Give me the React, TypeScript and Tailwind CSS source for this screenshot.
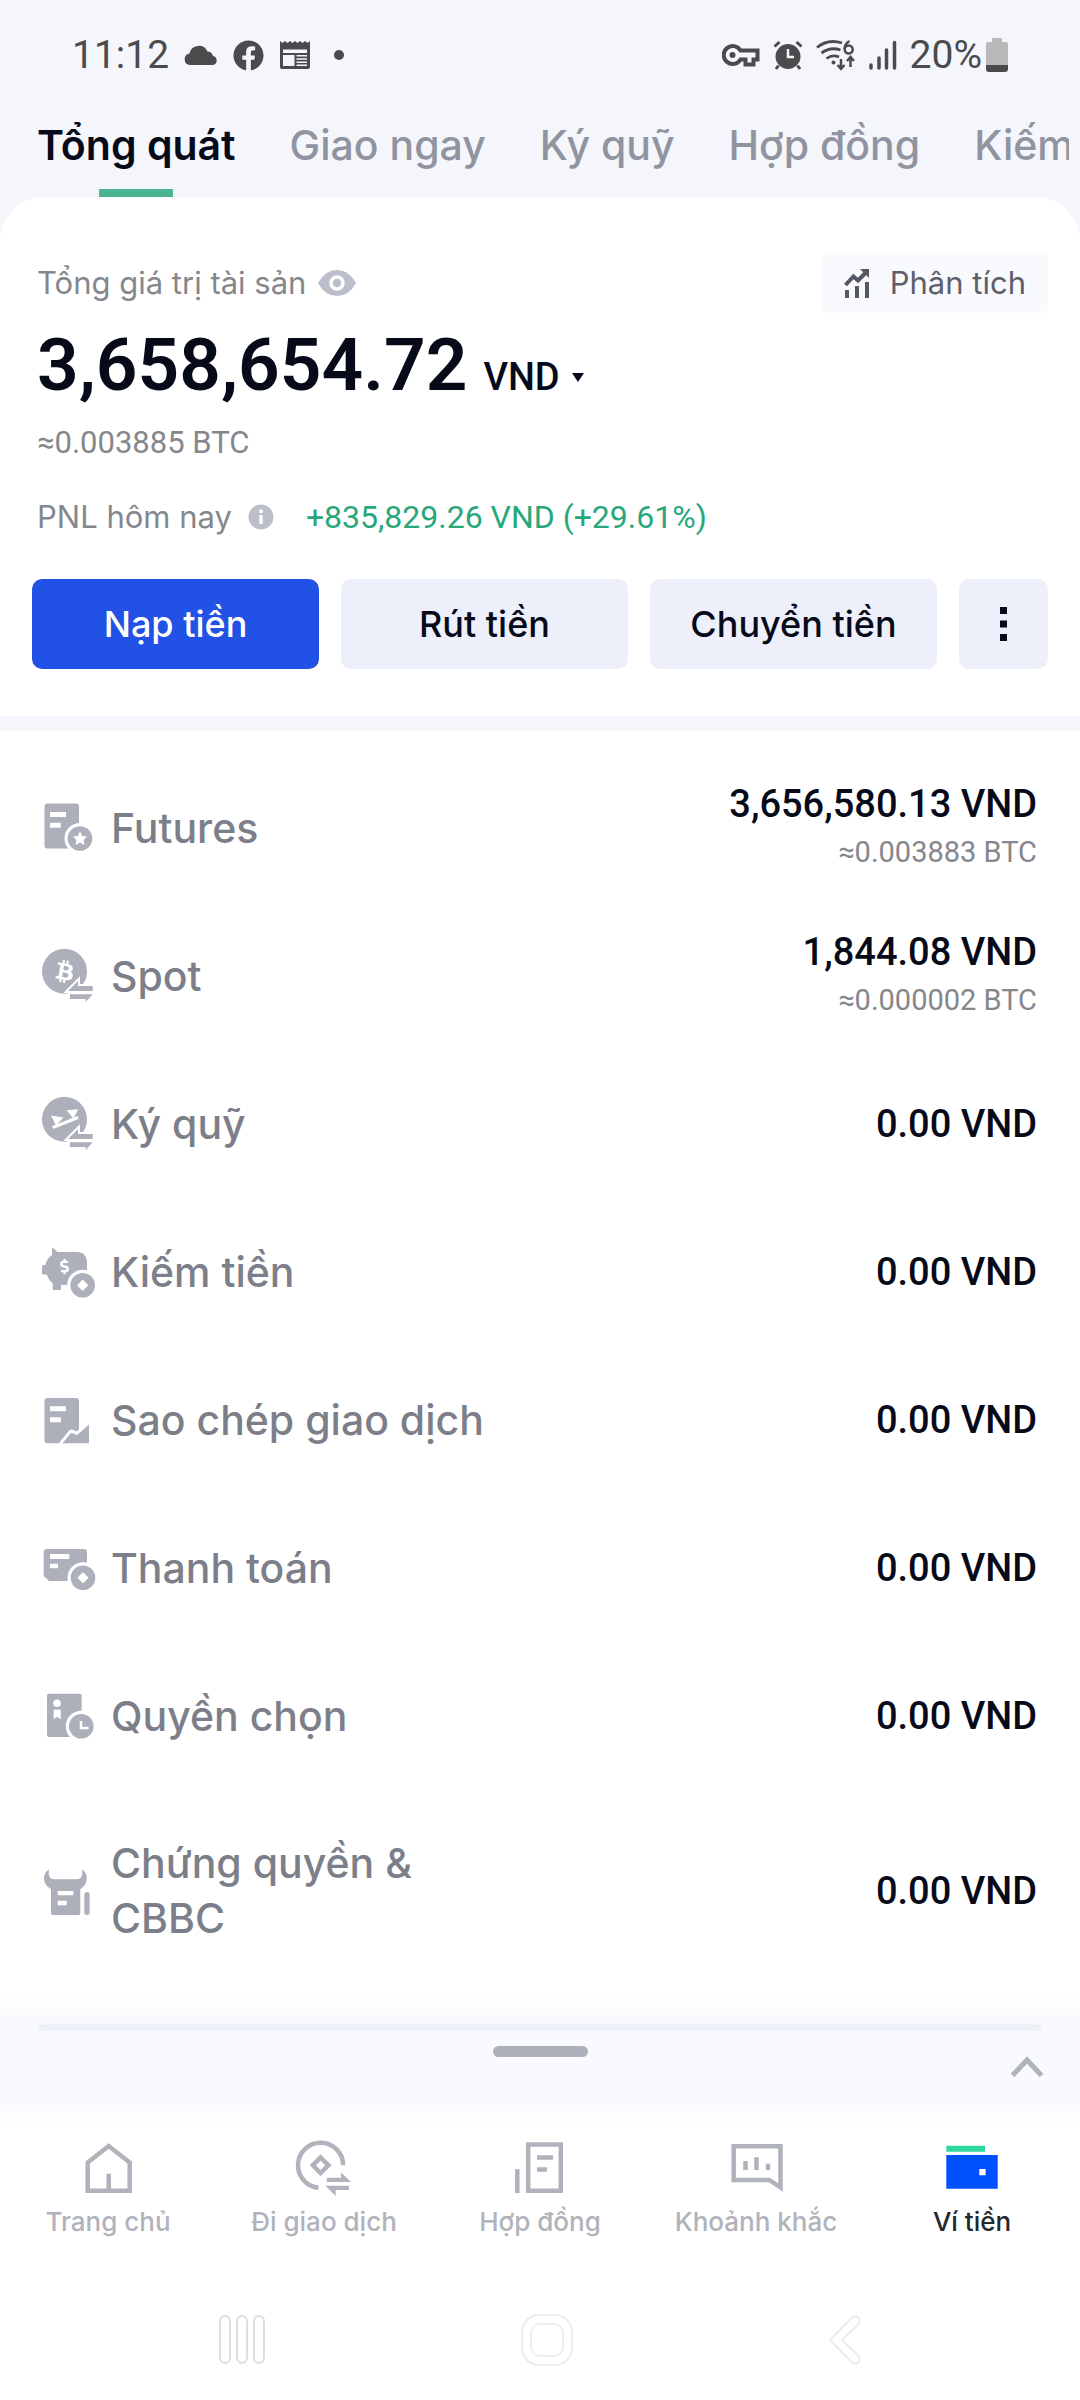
import { useState } from "react";
import type { ReactNode } from "react";
import { FaBtc, FaDollarSign, FaFacebook } from "react-icons/fa";

const tabs = ["Tổng quát", "Giao ngay", "Ký quỹ", "Hợp đồng", "Kiếm tiền"];

/* Small parts shared by the account icons */

function Badge({ cx, cy, children }: { cx: number; cy: number; children?: ReactNode }) {
  return (
    <>
      <circle cx={cx} cy={cy} r="15.5" fill="#fff" />
      <circle cx={cx} cy={cy} r="12.3" />
      {children}
    </>
  );
}

function Diamond({ cx, cy }: { cx: number; cy: number }) {
  return (
    <rect
      x={cx - 4}
      y={cy - 4}
      width="8"
      height="8"
      rx="1"
      fill="#fff"
      transform={`rotate(45 ${cx} ${cy})`}
    />
  );
}

function SwapArrows() {
  return (
    <>
      <path
        d="M28 43 38 33V38H52.7V43ZM30 46.3H52.7L45.7 54V51H30Z"
        fill="#fff"
        stroke="#fff"
        strokeWidth="4"
      />
      <path d="M28 43 38 33V38H52.7V43ZM30 46.3H52.7L45.7 54V51H30Z" />
    </>
  );
}

function AccountIcon({ children }: { children: ReactNode }) {
  return (
    <svg viewBox="0 0 56 56" className="size-14 shrink-0 fill-[#adb0ba]" aria-hidden="true">
      {children}
    </svg>
  );
}

const accounts = [
  {
    name: "Futures",
    amount: "3,656,580.13 VND",
    btc: "≈0.003883 BTC",
    icon: (
      <AccountIcon>
        <rect x="4.5" y="3.5" width="34.5" height="45" rx="3" />
        <path d="M10 12h16v5H10zM10 22.7h10.7v5H10z" fill="#fff" />
        <Badge cx={40} cy={38.5}>
          <path
            d="M40 31.5l2.2 4.4 4.9.7-3.5 3.4.8 4.9-4.4-2.3-4.4 2.3.8-4.9-3.5-3.4 4.9-.7z"
            fill="#fff"
          />
        </Badge>
      </AccountIcon>
    ),
  },
  {
    name: "Spot",
    amount: "1,844.08 VND",
    btc: "≈0.000002 BTC",
    icon: (
      <AccountIcon>
        <circle cx="24.5" cy="23.3" r="22.5" />
        <g transform="rotate(10 25 23.5)">
          <FaBtc x="13.5" y="12" size={23} color="#fff" fill="#fff" />
        </g>
        <SwapArrows />
      </AccountIcon>
    ),
  },
  {
    name: "Ký quỹ",
    amount: "0.00 VND",
    icon: (
      <AccountIcon>
        <circle cx="24.5" cy="23.3" r="22.5" />
        <path d="M12.7 31.5 38 21.5" stroke="#fff" strokeWidth="3" />
        <path d="M11 19.5 23.5 21.5 16 29.5ZM26.5 14.3 38.3 13.3 33.3 22.5Z" fill="#fff" />
        <SwapArrows />
      </AccountIcon>
    ),
  },
  {
    name: "Kiếm tiền",
    amount: "0.00 VND",
    icon: (
      <AccountIcon>
        <path d="M12 3.7Q15 5 17.5 8H37C43 8 47 12 47 18V34C47 38 44 41 40 41H21V44.5Q21 46 19.5 46H14Q12.7 46 12.7 44.5V39C10 37.5 8 34 6.7 30.5H3.5Q2 30.5 2 29V22.5Q2 21 3.5 21H5.5C6.5 16 8.500 13 12 11Z" />
        <FaDollarSign x="16.5" y="14.5" size={16} color="#fff" fill="#fff" />
        <Badge cx={42.7} cy={41.3}>
          <Diamond cx={42.7} cy={41.3} />
        </Badge>
      </AccountIcon>
    ),
  },
  {
    name: "Sao chép giao dịch",
    amount: "0.00 VND",
    icon: (
      <AccountIcon>
        <rect x="4.5" y="6" width="34.5" height="45.3" rx="3" />
        <path d="M10 14.3h16v5H10zM10 25.3h11v5H10z" fill="#fff" />
        <path
          d="M22.5 51.3 31.5 40.5 37 43 49 32.5V51.3Z"
          fill="#fff"
          stroke="#fff"
          strokeWidth="6"
          strokeLinejoin="round"
        />
        <path d="M22.5 51.3 30.5 41.5Q31.5 40.5 33 41.2L36 42.8Q37 43.3 38 42.3L49 32.5V51.3Z" />
      </AccountIcon>
    ),
  },
  {
    name: "Thanh toán",
    amount: "0.00 VND",
    icon: (
      <AccountIcon>
        <path d="M6.7 9H44Q47 9 47 12V41H9L3.7 36V12Q3.7 9 6.7 9Z" />
        <path d="M10 14h19.3v5H10zM10 23.7h8v4.5H10z" fill="#fff" />
        <Badge cx={43} cy={37.7}>
          <Diamond cx={43} cy={37.7} />
        </Badge>
      </AccountIcon>
    ),
  },
  {
    name: "Quyền chọn",
    amount: "0.00 VND",
    icon: (
      <AccountIcon>
        <rect x="7" y="5.7" width="34.7" height="43.3" rx="2" />
        <circle cx="17" cy="15.3" r="3.8" fill="#fff" />
        <path d="M13.6 21.7H20.8V31.3L17.2 28.8 13.6 31.3Z" fill="#fff" />
        <Badge cx={41.3} cy={38.3}>
          <path d="M41 33V40H48.5" fill="none" stroke="#fff" strokeWidth="2.5" />
        </Badge>
      </AccountIcon>
    ),
  },
  {
    name: "Chứng quyền & CBBC",
    amount: "0.00 VND",
    icon: (
      <AccountIcon>
        <path d="M9 6.5C8 12 9.5 16.3 14 16.3H37C41.5 16.3 43 12 42 6.5C45.5 8.5 47 12 46.7 16C46.3 21.5 43.5 24 40.3 26V50Q40.3 52 38.3 52H13Q11 52 11 50V26C7.5 24 4.5 21.5 4 16C3.8 12 5.5 8.5 9 6.5Z" />
        <rect x="44.3" y="29" width="5.4" height="23" rx="2.7" />
        <path d="M17.7 28h15.6v4.3H17.7zM17.7 37.7h9v4.6h-9z" fill="#fff" />
      </AccountIcon>
    ),
  },
];

function NavIcon({ children }: { children: ReactNode }) {
  return (
    <svg
      viewBox="0 0 60 60"
      className="size-[60px]"
      fill="none"
      stroke="#b0b3bb"
      strokeWidth="4.5"
      aria-hidden="true"
    >
      {children}
    </svg>
  );
}

const navItems = [
  {
    label: "Trang chủ",
    icon: (
      <NavIcon>
        <path d="M30.7 8 9.7 24.5V52.7H51.7V24.5ZM30.7 35.7V52" />
      </NavIcon>
    ),
  },
  {
    label: "Đi giao dịch",
    icon: (
      <NavIcon>
        <path d="M49.2 27.3A22.6 22.6 0 1 0 24.5 49.8" />
        <path d="M26.6 19.5 34.4 27.3 26.6 35.1 18.8 27.3Z" />
        <path
          d="M32.8 39.7H47V34.5L57 44H32.8ZM31.4 47.7H55V52H41.7V58Z"
          fill="#b0b3bb"
          stroke="none"
        />
      </NavIcon>
    ),
  },
  {
    label: "Hợp đồng",
    icon: (
      <NavIcon>
        <path d="M18.2 6.5H50.8V52.7H18.2ZM7.3 31.3V55M27 19.5H43M27 31.5H37" />
      </NavIcon>
    ),
  },
  {
    label: "Khoảnh khắc",
    icon: (
      <NavIcon>
        <path d="M7.7 8.3H54.5V49.5L43.5 42H7.7ZM19.5 23V32M30.5 19.3V32M42 25.7V32" />
      </NavIcon>
    ),
  },
  {
    label: "Ví tiền",
    icon: (
      <NavIcon>
        <path d="M4.3 7.7H43V13.7H4.3Z" fill="#2fd6a0" stroke="none" />
        <path d="M4.3 17H55.7V50.7H4.3Z" fill="#0050ff" stroke="none" />
        <path d="M37.3 31H43.6V37.3H37.3Z" fill="#fff" stroke="none" />
      </NavIcon>
    ),
  },
];

function StatusBar() {
  return (
    <div className="flex h-[110px] items-center justify-between px-[72px] font-['Roboto',sans-serif] text-[39px] text-[#4b4b4d]">
      <div className="flex items-center gap-[15px]">
        <span>11:12</span>
        <svg viewBox="0 0 34 20" className="h-5 w-[34px] fill-current" aria-hidden="true">
          <path d="M6 20A5.8 5.8 0 0 1 5.5 8.5 9.5 9.5 0 0 1 23.5 6.5 6 6 0 0 1 29 11 4.6 4.6 0 0 1 29 20Z" />
        </svg>
        <FaFacebook size={31} />
        <svg viewBox="0 0 32 30" className="h-[30px] w-8" aria-hidden="true">
          <path
            d="M1 1 3.5 3 6 1 8.5 3 11 1 13.5 3 16 1 18.5 3 21 1 23.5 3 26 1 28.5 3 31 1V27Q31 29 29 29H3Q1 29 1 27Z"
            fill="currentColor"
          />
          <path
            d="M4 9.5H28V13H4ZM4 15H15.5V26H4ZM17.5 15H28V16.5H17.5ZM17.5 18.2H28V19.7H17.5ZM17.5 21.4H28V22.9H17.5ZM17.5 24.6H28V26H17.5Z"
            fill="#f4f6fb"
          />
        </svg>
        <span className="ml-2 size-[10px] rounded-full bg-[#4b4b4d]" />
      </div>
      <div className="flex items-center gap-[13px]">
        <svg viewBox="0 0 38 24" className="h-6 w-[38px]" fill="none" stroke="currentColor" aria-hidden="true">
          <path
            d="M18.5 7.5A9 9 0 1 0 18.5 16.5H23.5V21.5H31.5V16.5H35.5V7.5Z"
            strokeWidth="4"
          />
          <circle cx="10.5" cy="12" r="3" fill="currentColor" stroke="none" />
        </svg>
        <svg viewBox="0 0 30 30" className="size-[30px]" aria-hidden="true">
          <circle cx="15" cy="16.5" r="12.5" fill="currentColor" />
          <path
            d="M1.5 6.5 6.5 2M28.5 6.5 23.5 2M5.5 25.5 3 29M24.5 25.5 27 29"
            stroke="currentColor"
            strokeWidth="3"
          />
          <path d="M15 9V17H21" fill="none" stroke="#f4f6fb" strokeWidth="2.5" />
        </svg>
        <svg
          viewBox="0 0 40 32"
          className="h-8 w-10"
          fill="none"
          stroke="currentColor"
          strokeWidth="2.8"
          aria-hidden="true"
        >
          <path d="M1 8.5Q12 -.5 26 4M5.5 14Q14.5 7.5 24.5 11M10.5 19.5Q16.5 15 23 18" />
          <circle cx="17.5" cy="23.5" r="2" fill="currentColor" stroke="none" />
          <path d="M33.5 2Q28.5 5 28.5 10" strokeWidth="2.5" />
          <circle cx="32.7" cy="10.5" r="4" strokeWidth="2.5" />
          <path d="M25 20V29M21.5 26 25 29.8 28.5 26M34.5 28V18M31 22 34.5 18 38 22" strokeWidth="2.5" />
        </svg>
        <svg
          viewBox="0 0 28 30"
          className="h-[30px] w-7"
          stroke="currentColor"
          strokeWidth="3.5"
          strokeLinecap="round"
          aria-hidden="true"
        >
          <path d="M2 25V28M10 18V28M17.5 10V28M25.5 2.5V28" />
        </svg>
        <div className="flex items-center gap-1">
          <span>20%</span>
          <svg viewBox="0 0 22 34" className="h-[34px] w-[22px]" aria-hidden="true">
            <path d="M6 1Q6 0 7 0H15Q16 0 16 1V4H20Q22 4 22 6V27H0V6Q0 4 2 4H6Z" fill="#b9b9bc" />
            <path d="M0 27H22V31Q22 34 19 34H3Q0 34 0 31Z" fill="currentColor" />
          </svg>
        </div>
      </div>
    </div>
  );
}

export default function App() {
  const [activeTab, setActiveTab] = useState("Tổng quát");
  const [activeNav, setActiveNav] = useState("Ví tiền");
  const [hidden, setHidden] = useState(false);

  const mask = (value: string) => (hidden ? "******" : value);

  return (
    <div className="flex min-h-screen flex-col bg-[#f4f6fb] font-['Inter',sans-serif]">
      <StatusBar />

      {/* Tabs */}
      <nav className="mr-[11px] flex h-[87px] gap-[54px] overflow-hidden pl-[37px]">
        {tabs.map((tab) => (
          <button
            key={tab}
            onClick={() => setActiveTab(tab)}
            className={`relative shrink-0 pb-4 text-[41px] whitespace-nowrap ${
              tab === activeTab ? "font-semibold text-[#070a18]" : "font-medium text-[#9094a1]"
            }`}
          >
            {tab}
            {tab === activeTab && (
              <span className="absolute bottom-0 left-1/2 h-2 w-[74px] -translate-x-1/2 bg-[#4ab391]" />
            )}
          </button>
        ))}
      </nav>

      <main className="flex flex-1 flex-col rounded-t-[44px] bg-white">
        {/* Balance */}
        <section className="px-8 pt-14 pb-[47px]">
          <div className="flex items-center justify-between">
            <div className="flex items-center gap-3 pl-[5px] text-[31px] text-[#85878d]">
              <span>Tổng giá trị tài sản</span>
              <button aria-label="Ẩn số dư" onClick={() => setHidden(!hidden)}>
                <svg viewBox="0 0 38 26" className="h-[26px] w-[38px]" aria-hidden="true">
                  <path d="M0 13Q7 0 19 0T38 13Q31 26 19 26T0 13Z" fill="#bcbecb" />
                  <circle cx="19" cy="13" r="6" fill="none" stroke="#fff" strokeWidth="3.5" />
                </svg>
              </button>
            </div>
            <button className="flex h-[60px] items-center gap-5 rounded-md bg-[#f9fafd] px-[22px] text-[31px] text-[#5d5f6b]">
              <svg
                viewBox="0 0 26 30"
                className="h-[30px] w-[26px]"
                fill="none"
                stroke="#555764"
                strokeWidth="4"
                aria-hidden="true"
              >
                <path d="M1.5 17 9.5 8.5 14 12.5 22.5 4M3 22V30M13 18V30M23 14V30" />
                <path d="M16 1H25V10Z" fill="#555764" stroke="none" />
              </svg>
              Phân tích
            </button>
          </div>

          <div className="flex items-baseline gap-4 pt-[2px] pl-[5px] font-['Roboto',sans-serif] text-[#070a18]">
            <span className="text-[73px] leading-[100px] font-semibold">{mask("3,658,654.72")}</span>
            <button className="flex items-center gap-3 text-[38px] font-medium">
              VND
              <svg viewBox="0 0 12 9" className="h-[9px] w-3 fill-current" aria-hidden="true">
                <path d="M0 0H12L6 9Z" />
              </svg>
            </button>
          </div>
          <p className="pl-[5px] font-['Roboto',sans-serif] text-[31px] leading-[56px] text-[#85878d]">
            {mask("≈0.003885 BTC")}
          </p>

          <div className="mt-[18px] flex h-14 items-center pl-[5px] text-[31px] text-[#85878d]">
            <span>PNL hôm nay</span>
            <svg viewBox="0 0 26 26" className="mr-8 ml-4 size-[26px]" aria-label="Thông tin">
              <circle cx="13" cy="13" r="12.5" fill="#bcbfc9" />
              <path d="M11.3 5.5h3.4v3.4h-3.400zM11.300 11h3.400v9h-3.400z" fill="#fff" />
            </svg>
            <span className="font-['Roboto',sans-serif] text-[32px] text-[#27a77a]">
              {mask("+835,829.26 VND (+29.61%)")}
            </span>
          </div>

          <div className="mt-[34px] flex gap-[22px] text-[36px] font-medium text-[#070a18]">
            <button className="h-[90px] flex-1 rounded-[10px] bg-[#2152e5] text-white">Nạp tiền</button>
            <button className="h-[90px] flex-1 rounded-[10px] bg-[#edf0fb]">Rút tiền</button>
            <button className="h-[90px] flex-1 rounded-[10px] bg-[#edf0fb]">Chuyển tiền</button>
            <button
              aria-label="Thêm"
              className="flex h-[90px] w-[89px] items-center justify-center rounded-[10px] bg-[#edf0fb]"
            >
              <svg viewBox="0 0 8 34" className="h-[34px] w-2 fill-current" aria-hidden="true">
                <path d="M0 0H7V7H0ZM0 13.5H7V20.5H0ZM0 27H7V34H0Z" />
              </svg>
            </button>
          </div>
        </section>

        <div className="h-[15px] bg-[#f5f6fb]" />

        {/* Accounts */}
        <ul className="pt-[23px]">
          {accounts.map((account) => (
            <li
              key={account.name}
              className="flex min-h-[148px] items-center justify-between py-[46px] pr-[43px] pl-10"
            >
              <div className="flex items-center gap-[15px]">
                {account.icon}
                <span className="max-w-[380px] text-[41px] leading-[55px] font-medium text-[#7c7f89]">
                  {account.name}
                </span>
              </div>
              <div className="-my-6 text-right font-['Roboto',sans-serif]">
                <div className="text-[38px] leading-[48px] font-medium text-[#070a18]">
                  {mask(account.amount)}
                </div>
                {account.btc && (
                  <div className="text-[29px] leading-[48px] text-[#85878d]">{mask(account.btc)}</div>
                )}
              </div>
            </li>
          ))}
        </ul>

        {/* Collapsed sheet */}
        <div className="mt-auto h-8 bg-linear-to-b from-white to-[#f7f9fc]" />
        <div className="relative flex h-[102px] items-start justify-center bg-linear-to-b from-[#f9fafd] from-80% to-white">
          <div className="absolute inset-x-[38px] top-0 h-[7px] rounded-t-full bg-[#edf0f7]" />
          <span className="mt-[22px] h-[11px] w-[95px] rounded-full bg-[#adb0bb]" />
          <button aria-label="Mở rộng" className="absolute top-8 right-9">
            <svg viewBox="0 0 34 22" className="h-[22px] w-[34px]" fill="none" aria-hidden="true">
              <path d="M2.5 19.5 17 4 31.5 19.5" stroke="#b0b3b8" strokeWidth="5" />
            </svg>
          </button>
        </div>
      </main>

      {/* Bottom navigation */}
      <nav className="grid grid-cols-5 bg-white pt-3">
        {navItems.map((item) => (
          <button
            key={item.label}
            onClick={() => setActiveNav(item.label)}
            className={`flex flex-col items-center gap-2 text-[26px] leading-8 font-medium whitespace-nowrap ${
              item.label === activeNav ? "text-[#24262b]" : "text-[#b0b3bb]"
            }`}
          >
            {item.icon}
            {item.label}
          </button>
        ))}
      </nav>

      {/* System buttons */}
      <div className="flex h-[163px] items-center justify-between bg-white px-[218px] pt-10">
        <button aria-label="Gần đây">
          <svg viewBox="0 0 48 50" className="h-[50px] w-12" fill="none" stroke="#dedee0" strokeWidth="2" aria-hidden="true">
            <rect x="2" y="1" width="10" height="47" rx="5" />
            <rect x="19" y="1" width="10" height="47" rx="5" />
            <rect x="36" y="1" width="10" height="47" rx="5" />
          </svg>
        </button>
        <button aria-label="Màn hình chính">
          <svg viewBox="0 0 52 52" className="size-[52px]" fill="none" stroke="#ededee" strokeWidth="2" aria-hidden="true">
            <rect x="1" y="1" width="50" height="50" rx="17" />
            <rect x="10" y="10" width="32" height="32" rx="9" />
          </svg>
        </button>
        <button aria-label="Quay lại">
          <svg viewBox="0 0 34 50" className="h-[50px] w-[34px]" fill="none" stroke="#ededee" strokeWidth="2" aria-hidden="true">
            <path d="M2 25 24 2.5Q27.5 0 30.5 3 33 6 30 9.5L14 25 30 40.5Q33 44 30.5 47 27.5 50 24 47.5Z" />
          </svg>
        </button>
      </div>
    </div>
  );
}
